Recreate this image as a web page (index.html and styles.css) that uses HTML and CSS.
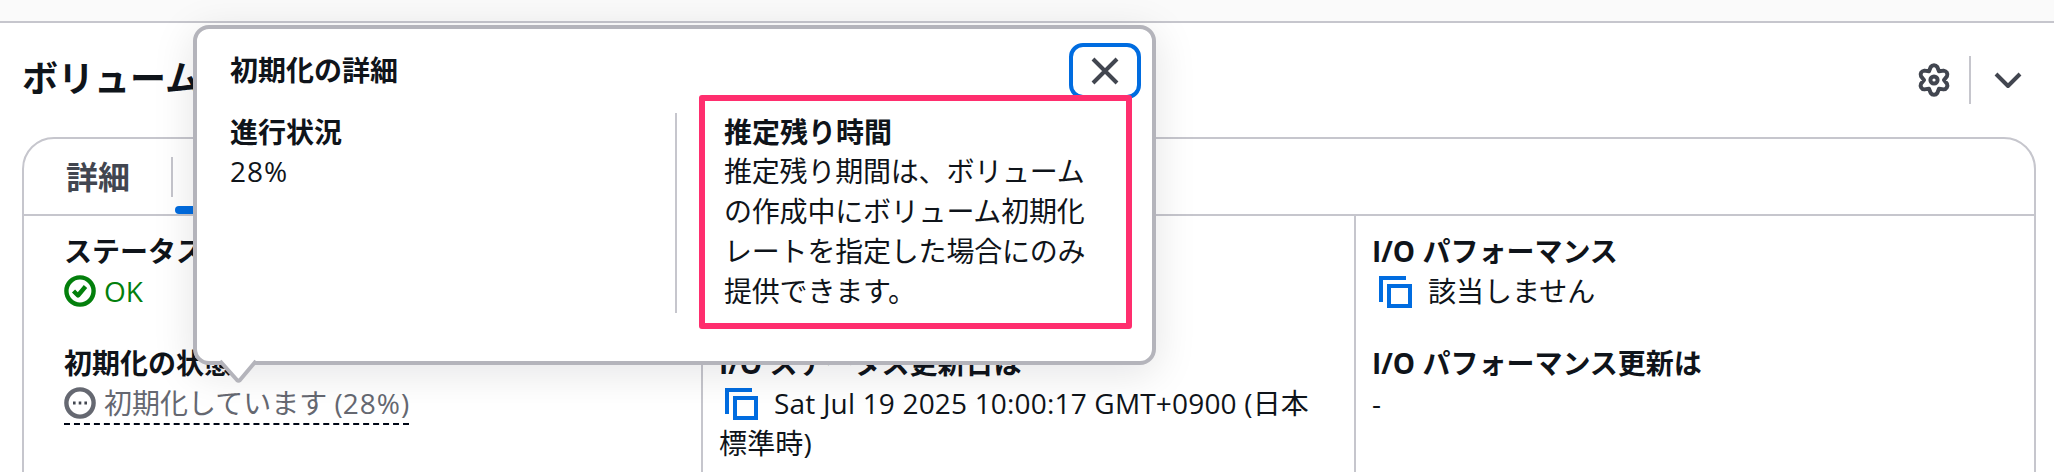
FILE: index.html
```html
<!DOCTYPE html>
<html lang="ja">
<head>
<meta charset="utf-8">
<title>ボリューム</title>
<link rel="stylesheet" href="styles.css">
</head>
<body>
<div class="topbar"></div>
<section class="section">
  <header class="section-head">
    <h2 class="section-title">ボリューム</h2>
    <div class="head-actions">
      <svg class="icon-gear" viewBox="-1 -1 34 34" aria-hidden="true"><path class="line" d="M12.73 3A4 4 0 0 1 19.27 3L21 7.34 25.71 6.62A4 4 0 0 1 28.98 12.28L26 16 28.98 19.72A4 4 0 0 1 25.71 25.38L21 24.66 19.27 29A4 4 0 0 1 12.73 29L11 24.66 6.29 25.38A4 4 0 0 1 3.02 19.72L6 16 3.02 12.28A4 4 0 0 1 6.29 6.62L11 7.34Z"/><circle class="line" cx="16" cy="16" r="3.6"/></svg>
      <span class="head-divider"></span>
      <svg class="icon-chevron" viewBox="0 0 30 18" aria-hidden="true"><path class="line" d="M3 3 15 15 27 3"/></svg>
    </div>
  </header>
  <div class="panel">
    <div class="tabs">
      <span class="tab">詳細</span>
      <span class="tab-divider"></span>
      <span class="tab-indicator"></span>
    </div>
    <div class="columns">
      <div class="col col-first">
        <div class="field">
          <div class="label">ステータス</div>
          <div class="value value-ok">
            <svg class="icon-32" viewBox="0 0 32 32" aria-hidden="true"><circle class="ok-line" cx="16" cy="16" r="13.6"/><path class="ok-line" d="M9.5 16 14 20.5 21.5 11.5"/></svg>
            <span>OK</span>
          </div>
        </div>
        <div class="field">
          <div class="label">初期化の状態</div>
          <div class="value value-progress">
            <span class="dashed">
              <svg class="icon-32" viewBox="0 0 32 32" aria-hidden="true"><circle class="grey-line" cx="16" cy="16" r="13.6"/><path class="dots" d="M9 16h2.6M14.7 16h2.6M20.4 16h2.6"/></svg>
              <span>初期化しています (<span class="pct">28%</span>)</span>
            </span>
          </div>
        </div>
      </div>
      <div class="col col-mid">
        <div class="field field-empty"></div>
        <div class="field">
          <div class="label">I/O ステータス更新日は</div>
          <div class="value-copy date">
            <svg class="icon-copy" viewBox="0 0 36 32" aria-hidden="true"><path class="copy-line" d="M30 2H5V26"/><rect class="copy-line" x="13" y="10" width="21" height="20"/></svg>Sat Jul 19 2025 10:00:17 GMT+0900 (日本標準時)
          </div>
        </div>
      </div>
      <div class="col col-last">
        <div class="field">
          <div class="label">I/O パフォーマンス</div>
          <div class="value-copy">
            <svg class="icon-copy" viewBox="0 0 36 32" aria-hidden="true"><path class="copy-line" d="M30 2H5V26"/><rect class="copy-line" x="13" y="10" width="21" height="20"/></svg>該当しません
          </div>
        </div>
        <div class="field">
          <div class="label">I/O パフォーマンス更新は</div>
          <div class="value">-</div>
        </div>
      </div>
    </div>
  </div>
</section>

<aside class="popover">
  <div class="pop-head">
    <div class="pop-title">初期化の詳細</div>
    <button class="pop-close" type="button" aria-label="閉じる">
      <svg class="icon-x" viewBox="0 0 28 28" aria-hidden="true"><path class="line" d="M2 2 26 26M26 2 2 26"/></svg>
    </button>
  </div>
  <div class="pop-body">
    <div class="pop-col">
      <div class="label">進行状況</div>
      <div class="pop-text pct">28%</div>
    </div>
    <div class="pop-col pop-col-right">
      <div class="label">推定残り時間</div>
      <div class="pop-text pop-text-cjk">推定残り期間は、ボリュームの作成中にボリューム初期化レートを指定した場合にのみ提供できます。</div>
      <div class="annotation"></div>
    </div>
  </div>
  <svg class="pop-arrow" viewBox="0 0 40 24" aria-hidden="true"><path class="arrow-shape" d="M1 0 18 19 Q19.5 20.5 21 19 L37 0"/></svg>
</aside>
</body>
</html>
```
FILE: styles.css
```css
* { box-sizing: border-box; }
html, body {
  margin: 0;
  height: 472px;
  overflow: hidden;
  background: #fff;
}
body {
  position: relative;
  font-family: "Open Sans", "Noto Sans CJK JP", sans-serif;
  font-size: 28px;
  line-height: 40px;
  color: #0f141a;
}
.topbar {
  height: 23px;
  background: #fafafa;
  border-bottom: 2px solid #c6c6cd;
}
.section { padding: 0 18px 0 22px; }
.section-head {
  display: flex;
  justify-content: space-between;
  align-items: center;
  height: 114px;
}
.section-title {
  margin: -2px 0 0;
  font-size: 36px;
  line-height: 48px;
  font-weight: 700;
}
.head-actions {
  display: flex;
  align-items: center;
  margin-right: 13px;
}
.head-divider {
  width: 2px;
  height: 48px;
  margin: 0 22px 0 18px;
  background: #c6c6cd;
}
.icon-32 {
  display: inline-block;
  width: 32px;
  height: 32px;
  flex: none;
}
.icon-gear { display: block; width: 34px; height: 34px; flex: none; }
.icon-chevron { width: 30px; height: 18px; display: block; }
.line, .ok-line, .grey-line, .copy-line, .arrow-shape {
  fill: none;
  stroke-width: 4;
  stroke-linejoin: round;
}
.line { stroke: #424650; }
.ok-line { stroke: #037f0c; stroke-width: 4.4; }
.grey-line { stroke: #656871; stroke-width: 4.4; }
.copy-line { stroke: #006ce0; stroke-linejoin: miter; }
.dots { fill: none; stroke: #424650; stroke-width: 3; }
.panel {
  height: 420px;
  border: 2px solid #c6c6cd;
  border-radius: 32px;
}
.tabs {
  display: flex;
  align-items: center;
  height: 77px;
  border-bottom: 2px solid #c6c6cd;
}
.tab {
  padding: 0 41px 0 42px;
  font-size: 32px;
  font-weight: 700;
  color: #424650;
}
.tab-divider {
  width: 2px;
  height: 40px;
  background: #c6c6cd;
}
.tab-indicator {
  align-self: flex-end;
  width: 120px;
  height: 8px;
  margin-left: 2px;
  border-radius: 8px;
  background: #006ce0;
}
.columns {
  display: grid;
  grid-template-columns: 677px 653px 1fr;
  height: 320px;
}
.col {
  padding: 15px 30px 0 17px;
  border-left: 2px solid #c6c6cd;
}
.col-first { padding-left: 40px; border-left: 0; }
.col-mid { padding-left: 16px; }
.col-last { padding-left: 16px; }
.field { height: 112px; }
.label { font-weight: 700; }
.value {
  display: flex;
  align-items: center;
  gap: 8px;
}
.value-ok { color: #037f0c; }
.value-progress { color: #656871; }
.dashed {
  display: inline-flex;
  align-items: center;
  gap: 8px;
  border-bottom: 2px dashed #000716;
}
.pct { letter-spacing: 1px; }
.date { letter-spacing: 0.18px; }
.icon-copy {
  display: inline-block;
  width: 36px;
  height: 32px;
  margin: 0 16px 0 4px;
  vertical-align: -6px;
}
.date .icon-copy { margin-left: 3px; }
.popover {
  position: absolute;
  left: 193px;
  top: 25px;
  width: 963px;
  height: 340px;
  padding: 14px 11px 0 33px;
  background: #fff;
  border: 4px solid #b4b4bb;
  border-radius: 16px;
  box-shadow: 0 8px 40px 2px rgba(0, 7, 22, 0.1);
}
.pop-head {
  display: flex;
  justify-content: space-between;
  align-items: center;
  height: 56px;
  margin-bottom: 14px;
}
.pop-title { font-weight: 700; margin-top: -2px; }
.pop-close {
  display: flex;
  align-items: center;
  justify-content: center;
  width: 72px;
  height: 56px;
  padding: 0;
  background: none;
  border: 4px solid #006ce0;
  border-radius: 14px;
}
.icon-x { width: 28px; height: 28px; display: block; }
.pop-body {
  display: grid;
  grid-template-columns: 445px 1fr;
  height: 200px;
}
.pop-col .label { margin: -1px 0 -1px; }
.pop-col-right {
  position: relative;
  padding-left: 47px;
  border-left: 2px solid #c6c6cd;
}
.pop-col-right .label, .pop-col-right .pop-text { width: 380px; }
.pop-text-cjk { letter-spacing: -0.2px; }
.annotation {
  position: absolute;
  left: 22px;
  top: -18px;
  width: 433px;
  height: 234px;
  border: 6px solid #ff2e6e;
  border-radius: 3px;
}
.pop-arrow {
  position: absolute;
  left: 22px;
  top: 332px;
  width: 40px;
  height: 24px;
  overflow: visible;
}
.arrow-shape { fill: #fff; stroke: #b4b4bb; }
```
